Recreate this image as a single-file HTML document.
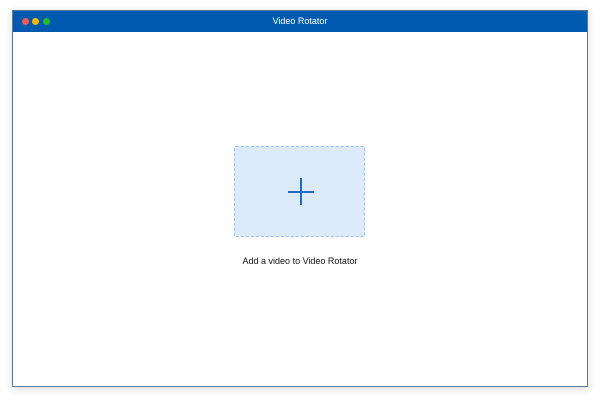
<!DOCTYPE html>
<html><head><style>
body{margin:0;width:600px;height:401px;background:#fff;position:relative;overflow:hidden;font-family:"Liberation Sans",sans-serif}
.win{position:absolute;left:12px;top:10px;width:574px;height:375px;border:1px solid #5a7a98;background:#fff;box-shadow:0 2px 8px rgba(0,0,0,.15)}
.tb{position:absolute;left:0;top:0;right:0;height:21px;background:#005bb0;color:#fff;font-size:9px;text-align:center;line-height:21px}
.d{position:absolute;top:7px;width:7px;height:7px;border-radius:50%}
.box{position:absolute;left:221px;top:135px;width:129px;height:89px;border:1.5px dashed #a3c2e3;background:#dcebfc;border-radius:2px}
.h{position:absolute;left:53px;top:44px;width:26px;height:1.5px;background:#1a6fc4}
.v{position:absolute;left:65px;top:31px;width:1.5px;height:27px;background:#1a6fc4}
.t{position:absolute;left:0;right:0;top:245px;text-align:center;font-size:9px;color:#111}
</style></head><body>
<div class="win">
<div class="tb">Video Rotator
<div class="d" style="left:9px;background:#f15a58"></div>
<div class="d" style="left:19px;background:#f5b800"></div>
<div class="d" style="left:30px;background:#1fbc2a"></div>
</div>
<div class="box"><div class="h"></div><div class="v"></div></div>
<div class="t">Add a video to Video Rotator</div>
</div>
</body></html>
